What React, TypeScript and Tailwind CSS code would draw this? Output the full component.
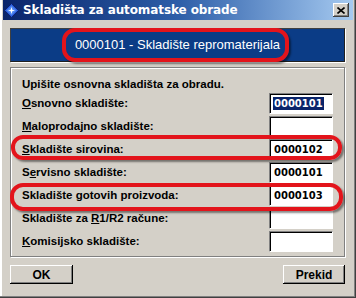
const sans = "font-['Liberation_Sans',Arial,sans-serif]";

function Field({ value, selected }: { value?: string; selected?: boolean }) {
  return (
    <div className="w-[64px] h-[21px] bg-white border border-t-[#808080] border-l-[#808080] border-b-white border-r-white shadow-[inset_1px_1px_0_#000] flex items-center pl-[3px] font-['DejaVu_Sans',sans-serif] font-bold text-[10px] text-black">
      {value && (
        <span className={selected ? "bg-[#0a246a] text-white px-[1px] leading-[13px]" : "px-[1px]"}>
          {value}
        </span>
      )}
    </div>
  );
}

const rows: { pre: string; key: string; post: string; value?: string; selected?: boolean }[] = [
  { pre: "", key: "O", post: "snovno skladište:", value: "0000101", selected: true },
  { pre: "", key: "M", post: "aloprodajno skladište:" },
  { pre: "", key: "S", post: "kladište sirovina:", value: "0000102" },
  { pre: "S", key: "e", post: "rvisno skladište:", value: "0000101" },
  { pre: "Skladište ", key: "g", post: "otovih proizvoda:", value: "0000103" },
  { pre: "Skladište za ", key: "R", post: "1/R2 račune:" },
  { pre: "", key: "K", post: "omisijsko skladište:" },
];

export default function App() {
  return (
    <div className={`relative w-[356px] h-[298px] bg-[#d4d0c8] flex flex-col px-[3px] shadow-[inset_-1px_-1px_0_#404040,inset_-2px_-2px_0_#808080,inset_2px_0_0_#fff] ${sans}`}>
      {/* title bar */}
      <div className="h-[20px] flex items-center bg-gradient-to-r from-[#0a246a] via-[#2d5ea8] to-[#a6caf0] pl-[1px] pr-[4px]">
        <svg width="15" height="15" viewBox="0 0 15 15" className="mr-[4px]">
          <path d="M7.5 0.5 L14.5 7.5 L7.5 14.5 L0.5 7.5 Z" fill="#2a5bd7" stroke="#0b1f6e" />
          <path d="M7.5 2.5 L12.5 7.5 L7.5 12.5 L2.5 7.5 Z" fill="#4f86f0" />
          <path d="M7.5 4 L8.3 6.7 L11 7.5 L8.3 8.3 L7.5 11 L6.7 8.3 L4 7.5 L6.7 6.7 Z" fill="#fff" />
        </svg>
        <span className="font-['DejaVu_Sans',sans-serif] font-bold text-[12px] text-white tracking-[-0.1px]">
          Skladišta za automatske obrade
        </span>
        <div className="ml-auto w-[16px] h-[14px] bg-[#d4d0c8] shadow-[inset_-1px_-1px_0_#404040,inset_1px_1px_0_#fff,inset_-2px_-2px_0_#808080] flex items-center justify-center">
          <svg width="8" height="7" viewBox="0 0 8 7">
            <path d="M0.5 0.5 L7.5 6.5 M7.5 0.5 L0.5 6.5" stroke="#000" strokeWidth="1.6" />
          </svg>
        </div>
      </div>

      <div className="flex flex-col pl-[7px] pr-[8px]">
        {/* blue header panel */}
        <div className="mt-[8px] h-[34px] bg-[#0b3c86] border border-t-[#404040] border-l-[#404040] border-b-[#202020] border-r-[#202020] shadow-[1px_1px_0_#fff] flex items-center justify-center">
          <span className="text-white text-[13px]">0000101 - Skladište repromaterijala</span>
        </div>

        {/* group box */}
        <div className="mt-[5px] h-[190px] border border-[#808080] shadow-[inset_1px_1px_0_#fff,1px_1px_0_#fff] pl-[11px] pr-[11px] pt-[8px] flex flex-col">
          <div className="h-[17px] flex items-center font-bold text-[11.5px] text-black">
            Upišite osnovna skladišta za obradu.
          </div>
          {rows.map((r, i) => (
            <div key={i} className="h-[21px] mb-[2px] flex items-center justify-between">
              <span className="font-bold text-[11.5px] text-black">
                {r.pre}
                <span className="underline underline-offset-[1px]">{r.key}</span>
                {r.post}
              </span>
              <Field value={r.value} selected={r.selected} />
            </div>
          ))}
        </div>

        {/* buttons */}
        <div className="mt-[8px] flex justify-between">
          <button className="w-[63px] h-[19px] bg-[#d4d0c8] shadow-[inset_-1px_-1px_0_#000,inset_1px_1px_0_#fff,inset_-2px_-2px_0_#808080] font-bold text-[12px] text-black flex items-center justify-center">
            OK
          </button>
          <button className="w-[62px] h-[19px] bg-[#d4d0c8] shadow-[inset_-1px_-1px_0_#000,inset_1px_1px_0_#fff,inset_-2px_-2px_0_#808080] font-bold text-[12px] text-black flex items-center justify-center">
            Prekid
          </button>
        </div>
      </div>

      {/* red annotation marks */}
      <div className="absolute left-[62px] top-[28px] w-[227px] h-[34px] rounded-[13px] border-[4px] border-[#e3141b] shadow-[2px_2px_2px_rgba(0,0,0,0.45)]" />
      <div className="absolute left-[11px] top-[135px] w-[331px] h-[25px] rounded-[12px] border-[4px] border-[#e3141b] shadow-[2px_2px_2px_rgba(0,0,0,0.45)]" />
      <div className="absolute left-[10px] top-[183px] w-[333px] h-[28px] rounded-[13px] border-[4px] border-[#e3141b] shadow-[2px_2px_2px_rgba(0,0,0,0.45)]" />
    </div>
  );
}
